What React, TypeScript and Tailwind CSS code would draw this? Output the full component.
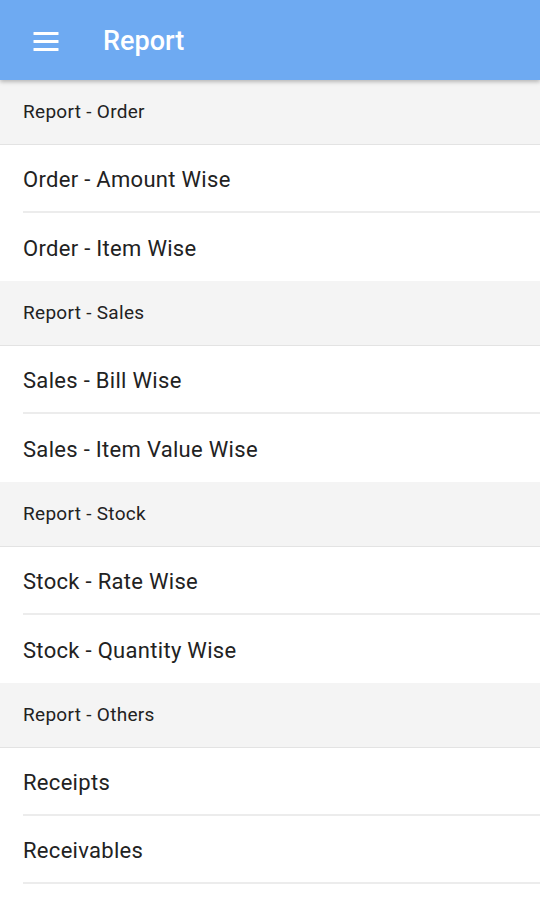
const groups = [
  { title: "Report - Order", items: ["Order - Amount Wise", "Order - Item Wise"] },
  { title: "Report - Sales", items: ["Sales - Bill Wise", "Sales - Item Value Wise"] },
  { title: "Report - Stock", items: ["Stock - Rate Wise", "Stock - Quantity Wise"] },
  { title: "Report - Others", items: ["Receipts", "Receivables"] },
];

function MenuIcon() {
  return (
    <svg width="26" height="20" viewBox="0 0 26 20" fill="white">
      <rect x="0.5" y="1" width="25" height="3" rx="0.5" />
      <rect x="0.5" y="9" width="25" height="3" rx="0.5" />
      <rect x="0.5" y="17" width="25" height="3" rx="0.5" />
    </svg>
  );
}

export default function App() {
  return (
    <div className="min-h-[900px] bg-white font-['Roboto',sans-serif] text-[#222]">
      {/* Toolbar */}
      <div className="relative z-10 flex h-[80px] items-center bg-[#6eaaf2] shadow-[0_2px_4px_rgba(0,0,0,0.25)]">
        <div className="w-[103px] pl-[33px] pt-[1px]">
          <MenuIcon />
        </div>
        <h1 className="pt-[3px] text-[27px] font-medium text-white">Report</h1>
      </div>

      {/* Liste */}
      {groups.map((g) => (
        <div key={g.title}>
          <div className="flex h-[65px] items-center border-b border-[#e3e3e3] bg-[#f4f4f4] px-[23px] text-[19px] tracking-[0.3px]">
            {g.title}
          </div>
          {g.items.map((item, i) => (
            <div key={item} className="pl-[23px]">
              <div
                className={
                  "flex h-[68px] items-center pt-[2px] text-[22px] tracking-[0.3px] " +
                  (i === g.items.length - 1 && g.title !== "Report - Others"
                    ? ""
                    : "border-b-2 border-[#ececec]")
                }
              >
                {item}
              </div>
            </div>
          ))}
        </div>
      ))}
    </div>
  );
}
